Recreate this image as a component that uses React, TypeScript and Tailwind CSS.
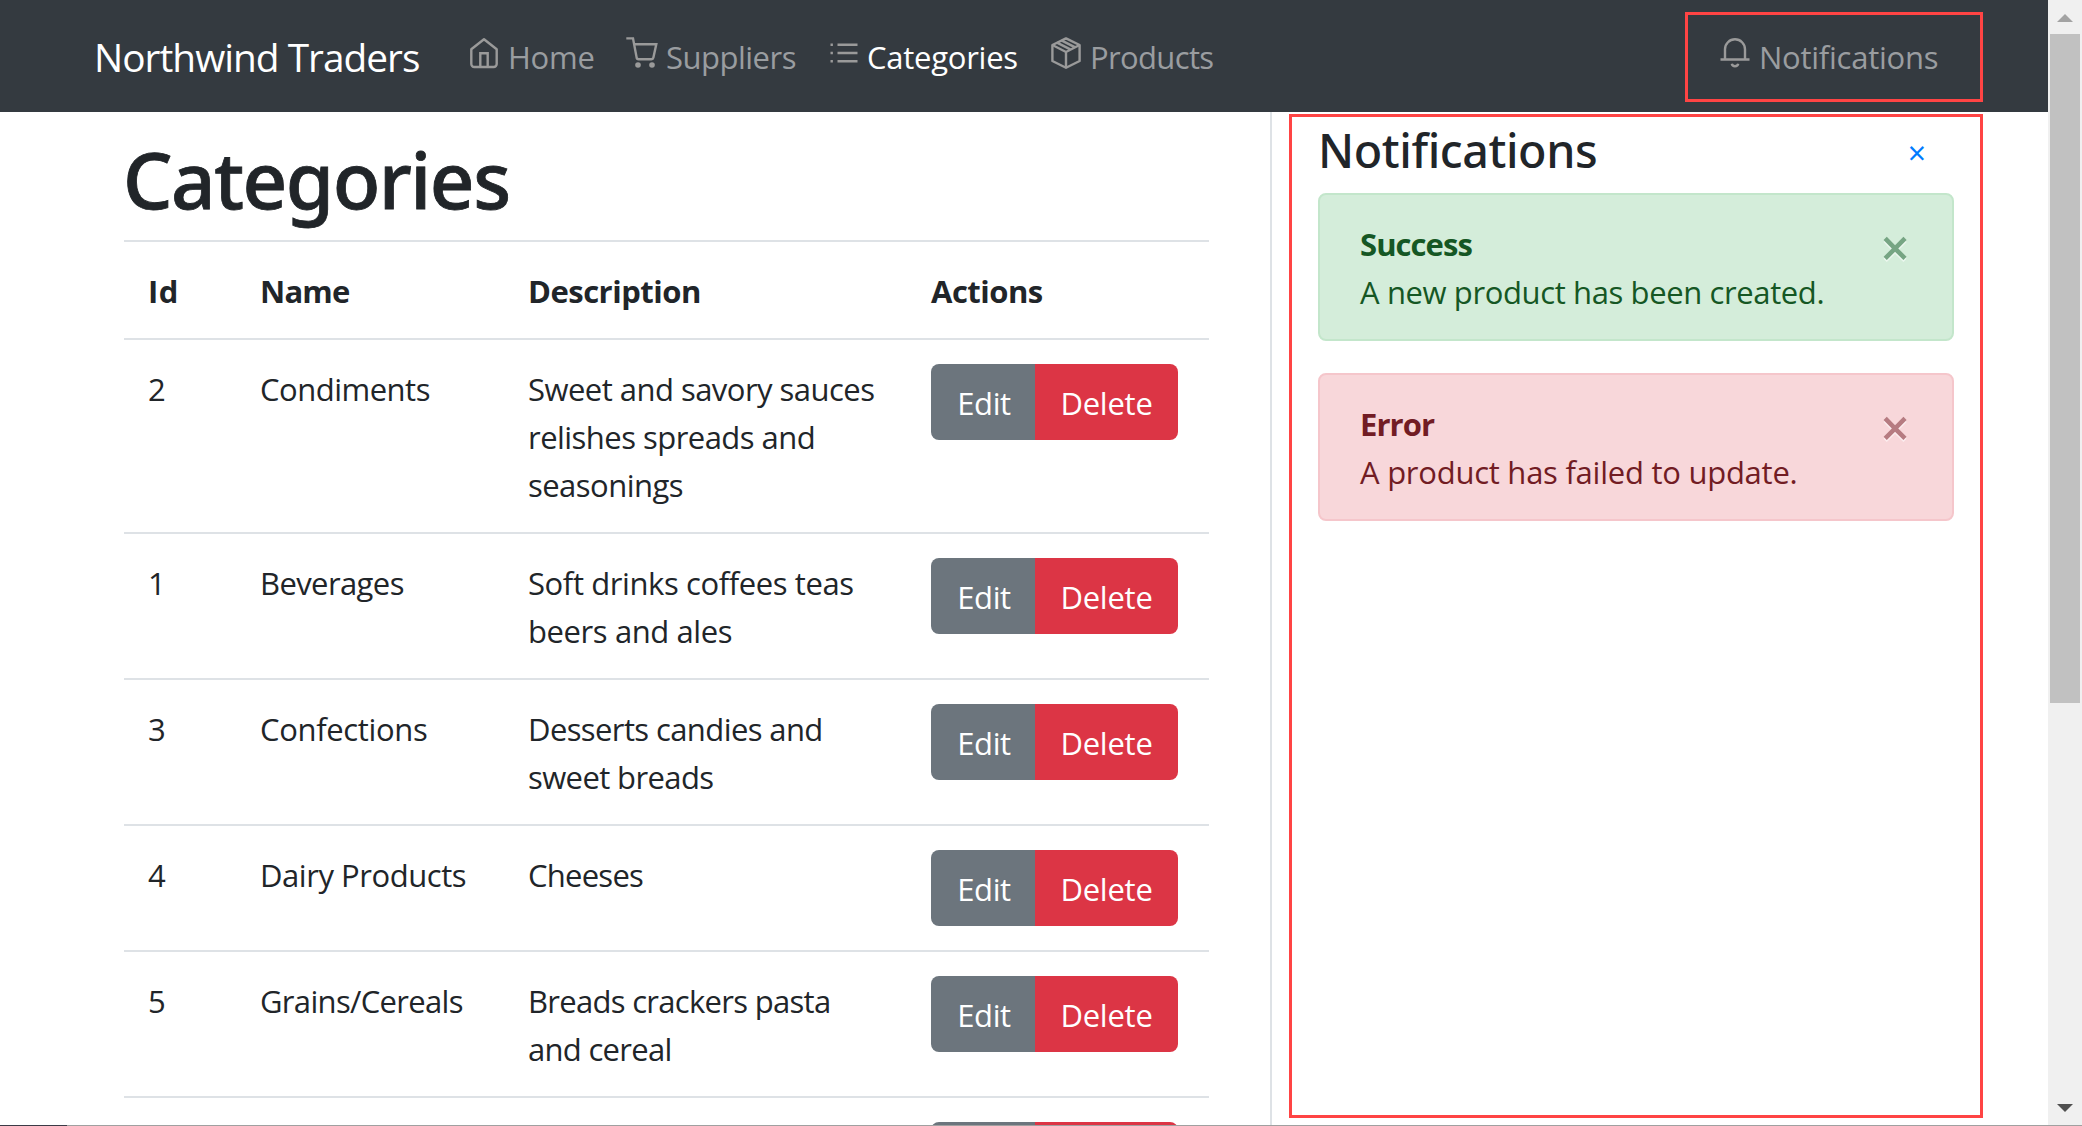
import type { ReactNode } from 'react';

const rows = [
  { id: 2, name: 'Condiments', nameClass: 'tracking-[-0.5px]', lines: ['Sweet and savory sauces', 'relishes spreads and', 'seasonings'], lineClass: 'tracking-[-0.53px]' },
  { id: 1, name: 'Beverages', nameClass: 'tracking-[-0.6px]', lines: ['Soft drinks coffees teas', 'beers and ales'], lineClass: 'tracking-[-0.4px]' },
  { id: 3, name: 'Confections', nameClass: 'tracking-[-0.35px]', lines: ['Desserts candies and', 'sweet breads'], lineClass: 'tracking-[-0.6px]' },
  { id: 4, name: 'Dairy Products', nameClass: 'tracking-[-0.45px]', lines: ['Cheeses'], lineClass: 'tracking-[-0.75px]' },
  { id: 5, name: 'Grains/Cereals', nameClass: 'tracking-[-0.67px]', lines: ['Breads crackers pasta', 'and cereal'], lineClass: 'tracking-[-0.7px]' },
];

function Icon({ width = 30, children }: { width?: number; children: ReactNode }) {
  return (
    <svg width={width} height={32} viewBox={`0 0 ${width} 32`} fill="none" stroke="currentColor" strokeWidth={2.4} className="mt-1 shrink-0 text-[#9a9a9a]">
      {children}
    </svg>
  );
}

const HomeIcon = () => (
  <Icon>
    <path d="M2.3 12.2 15 2.2l12.7 10V27a3 3 0 0 1-3 3H5.3a3 3 0 0 1-3-3z" strokeLinejoin="round" />
    <path d="M11.3 30V16.3h7.4V30" />
  </Icon>
);

const CartIcon = () => (
  <Icon width={32}>
    <path d="M0.3 1.4H7l3.6 19a2 2 0 0 0 2 1.8h12.8a2 2 0 0 0 2-1.6l2.9-13.3H8" />
    <circle cx="12" cy="28" r="2.8" fill="currentColor" stroke="none" />
    <circle cx="26" cy="28" r="2.8" fill="currentColor" stroke="none" />
  </Icon>
);

const ListIcon = () => (
  <Icon>
    <path d="M8.5 7.8h20M8.5 16h20M8.5 24.2h20M1.5 7.8h2.4M1.5 16h2.4M1.5 24.2h2.4" />
  </Icon>
);

const BoxIcon = () => (
  <Icon>
    <path d="M15 1.4 28.6 8v16L15 30.8 1.4 24V8z" strokeLinejoin="round" />
    <path d="M1.4 8 15 15 28.6 8M15 15v16M6 5.6l13.8 7M10.4 3.4l13.8 7" />
  </Icon>
);

const BellIcon = () => (
  <Icon>
    <path d="M5 22V12.3a10 10 0 0 1 20 0V22M0.5 22.5h29" />
    <path d="M11.8 26.8c.6 3.2 5.8 3.2 6.4 0" />
  </Icon>
);

function Alert({ title, text, className, textClass, closeClass }: { title: string; text: string; className: string; textClass: string; closeClass: string }) {
  return (
    <div className={`mb-8 flex h-[148px] w-[636px] justify-between rounded-lg border-2 pt-[25px] pr-[42px] pl-10 ${className}`}>
      <div className="whitespace-nowrap">
        <div className="font-bold tracking-[-0.94px]">{title}</div>
        <div className={textClass}>{text}</div>
      </div>
      <button className={`-mt-[3px] h-[60px] text-[52px] leading-[60px] font-semibold [text-shadow:0_2px_0_#fff8] ${closeClass}`}>×</button>
    </div>
  );
}

export default function App() {
  return (
    <div className="relative flex h-[1126px] w-[2082px] overflow-hidden bg-white font-['Open_Sans','Noto_Sans',sans-serif] text-[31px] leading-[48px] text-[#212529]">
      <div className="flex w-[2048px] flex-col">
        <nav className="flex h-28 shrink-0 items-center bg-[#343a40] pl-[94px] whitespace-nowrap text-[#9a9da0]">
          <div className="mt-[2px] w-[375px] text-[38.8px] leading-[60px] tracking-[-0.98px] text-white">Northwind Traders</div>
          <a className="mt-[2px] flex w-[157px] gap-[9px] tracking-[-0.26px]"><HomeIcon />Home</a>
          <a className="mt-[2px] flex w-[203px] gap-2 tracking-[-0.5px]"><CartIcon />Suppliers</a>
          <a className="mt-[2px] flex w-[222px] gap-2 tracking-[-0.25px] text-white"><ListIcon />Categories</a>
          <a className="mt-[2px] flex w-[669px] gap-[9px] tracking-[-0.64px]"><BoxIcon />Products</a>
          <a className="mt-[2px] flex gap-[9px] tracking-[-0.25px]"><BellIcon />Notifications</a>
        </nav>
        <div className="flex min-h-0 flex-1">
          <main className="w-[1270px] shrink-0 overflow-hidden pt-[19px] pl-[124px]">
            <h1 className="mb-[13px] -ml-px font-['Noto_Sans'] text-[78px] leading-[96px] font-medium tracking-[-1.5px] [-webkit-text-stroke:0.8px_#212529]">Categories</h1>
            <div className="w-[1085px]">
              <div className="grid h-[98px] grid-cols-[112px_268px_403px_302px] border-t-2 border-[#dee2e6] pt-[25px] font-bold">
                <div className="pl-6 tracking-[0.5px]">Id</div>
                <div className="pl-6 tracking-[-0.81px]">Name</div>
                <div className="pl-6 tracking-[-0.5px]">Description</div>
                <div className="pl-6 tracking-[-0.5px]">Actions</div>
              </div>
              {rows.map((r) => (
                <div key={r.id} className="grid grid-cols-[112px_268px_403px_302px] border-t-2 border-[#dee2e6] pt-6 pb-6 whitespace-nowrap">
                  <div className="pt-px pl-6">{r.id}</div>
                  <div className={`pt-px pl-6 ${r.nameClass}`}>{r.name}</div>
                  <div className={`-mb-px pt-px pl-6 ${r.lineClass}`}>
                    {r.lines.map((l) => <div key={l}>{l}</div>)}
                  </div>
                  <div className="flex pl-6 text-white">
                    <button className="h-[76px] w-[104px] rounded-l-lg bg-[#6c757d] pt-px pl-[2px] text-center tracking-[-0.35px]">Edit</button>
                    <button className="h-[76px] w-[143px] rounded-r-lg bg-[#dc3545] pt-px text-center tracking-[-0.25px]">Delete</button>
                  </div>
                </div>
              ))}
              <div className="flex border-t-2 border-[#dee2e6] pt-6 pl-[807px]">
                <div className="h-[76px] w-[104px] rounded-l-lg bg-[#6c757d]" />
                <div className="h-[76px] w-[143px] rounded-r-lg bg-[#dc3545]" />
              </div>
            </div>
          </main>
          <aside className="flex-1 border-l-2 border-[#dee2e6] pt-[9px] pl-[46px]">
            <div className="mb-[14px] flex h-[58px] w-[636px] justify-between pr-[28px]">
              <h2 className="font-['Noto_Sans'] text-[46.6px] leading-[58px] font-medium tracking-[-0.41px]">Notifications</h2>
              <button className="mt-[3px] h-[58px] text-[32px] leading-[58px] text-[#007bff]">×</button>
            </div>
            <Alert title="Success" text="A new product has been created." className="border-[#c3e6cb] bg-[#d4edda] text-[#155724]" textClass="tracking-[-0.38px]" closeClass="text-[#76a583]" />
            <Alert title="Error" text="A product has failed to update." className="border-[#f5c6cb] bg-[#f8d7da] text-[#721c24]" textClass="tracking-[-0.25px]" closeClass="text-[#b67b81]" />
          </aside>
        </div>
      </div>
      <div className="flex w-[34px] flex-col items-center bg-[#f0f0f0]">
        <svg width="16" height="34" viewBox="0 0 16 34" className="shrink-0"><path d="M0 22 8 14l8 8z" fill="#a3a3a3" /></svg>
        <div className="h-[669px] w-[30px] shrink-0 bg-[#c1c1c1]" />
        <svg width="16" height="34" viewBox="0 0 16 34" className="mt-auto"><path d="M0 12h16l-8 8z" fill="#505050" /></svg>
      </div>
      <div className="absolute top-3 left-[1685px] h-[90px] w-[298px] border-3 border-[#ff4444]" />
      <div className="absolute top-[114px] left-[1289px] h-[1004px] w-[694px] border-3 border-[#ff4444]" />
      <div className="absolute bottom-0 left-0 flex h-px w-full bg-[#a0a0a0]"><div className="w-[67px] bg-[#3b3b46]" /></div>
    </div>
  );
}
